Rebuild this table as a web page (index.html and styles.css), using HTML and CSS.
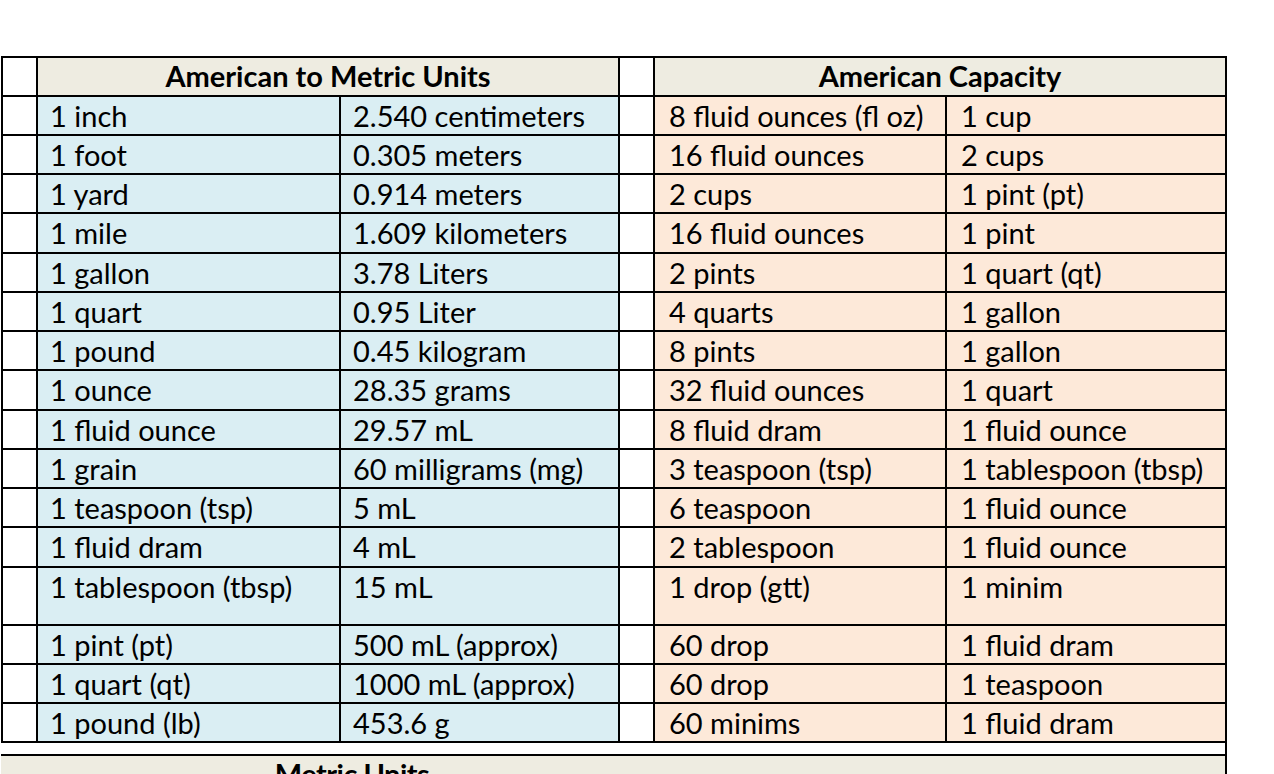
FILE: index.html
```html
<!DOCTYPE html>
<html>
<head>
<meta charset="utf-8">
<link rel="stylesheet" href="styles.css">
</head>
<body>
<div class="sheet">
  <div class="c w"></div><div class="c hd span2">American to Metric Units</div><div class="c w"></div><div class="c hd span2">American Capacity</div>

  <div class="c w"></div><div class="c b">1 inch</div><div class="c b">2.540 centimeters</div><div class="c w"></div><div class="c p">8 fluid ounces (fl oz)</div><div class="c p">1 cup</div>
  <div class="c w"></div><div class="c b">1 foot</div><div class="c b">0.305 meters</div><div class="c w"></div><div class="c p">16 fluid ounces</div><div class="c p">2 cups</div>
  <div class="c w"></div><div class="c b">1 yard</div><div class="c b">0.914 meters</div><div class="c w"></div><div class="c p">2 cups</div><div class="c p">1 pint (pt)</div>
  <div class="c w"></div><div class="c b">1 mile</div><div class="c b">1.609 kilometers</div><div class="c w"></div><div class="c p">16 fluid ounces</div><div class="c p">1 pint</div>
  <div class="c w"></div><div class="c b">1 gallon</div><div class="c b">3.78 Liters</div><div class="c w"></div><div class="c p">2 pints</div><div class="c p">1 quart (qt)</div>
  <div class="c w"></div><div class="c b">1 quart</div><div class="c b">0.95 Liter</div><div class="c w"></div><div class="c p">4 quarts</div><div class="c p">1 gallon</div>
  <div class="c w"></div><div class="c b">1 pound</div><div class="c b">0.45 kilogram</div><div class="c w"></div><div class="c p">8 pints</div><div class="c p">1 gallon</div>
  <div class="c w"></div><div class="c b">1 ounce</div><div class="c b">28.35 grams</div><div class="c w"></div><div class="c p">32 fluid ounces</div><div class="c p">1 quart</div>
  <div class="c w"></div><div class="c b">1 fluid ounce</div><div class="c b">29.57 mL</div><div class="c w"></div><div class="c p">8 fluid dram</div><div class="c p">1 fluid ounce</div>
  <div class="c w"></div><div class="c b">1 grain</div><div class="c b">60 milligrams (mg)</div><div class="c w"></div><div class="c p">3 teaspoon (tsp)</div><div class="c p">1 tablespoon (tbsp)</div>
  <div class="c w"></div><div class="c b">1 teaspoon (tsp)</div><div class="c b">5 mL</div><div class="c w"></div><div class="c p">6 teaspoon</div><div class="c p">1 fluid ounce</div>
  <div class="c w"></div><div class="c b">1 fluid dram</div><div class="c b">4 mL</div><div class="c w"></div><div class="c p">2 tablespoon</div><div class="c p">1 fluid ounce</div>
  <div class="c w"></div><div class="c b">1 tablespoon (tbsp)</div><div class="c b">15 mL</div><div class="c w"></div><div class="c p">1 drop (gtt)</div><div class="c p">1 minim</div>
  <div class="c w"></div><div class="c b">1 pint (pt)</div><div class="c b">500 mL (approx)</div><div class="c w"></div><div class="c p">60 drop</div><div class="c p">1 fluid dram</div>
  <div class="c w"></div><div class="c b">1 quart (qt)</div><div class="c b">1000 mL (approx)</div><div class="c w"></div><div class="c p">60 drop</div><div class="c p">1 teaspoon</div>
  <div class="c w"></div><div class="c b">1 pound (lb)</div><div class="c b">453.6 g</div><div class="c w"></div><div class="c p">60 minims</div><div class="c p">1 fluid dram</div>
</div>
<div class="metric">
  <div class="gap"></div>
  <div class="metric-head">
    <div class="metric-title">Metric Units</div>
    <div></div>
  </div>
</div>
</body>
</html>
```
FILE: styles.css
```css
html, body {
  margin: 0;
  padding: 0;
  background: #ffffff;
}
body {
  font-family: Lato, "Open Sans", sans-serif;
  font-size: 29px;
  color: #000;
  overflow: hidden;
}
.sheet {
  margin: 56px 0 0 1px;
  width: 1226px;
  box-sizing: border-box;
  display: grid;
  grid-template-columns: 33px 301px 277px 33px 290px 278px;
  grid-template-rows: 36.5px repeat(12, 37.25px) 56px repeat(3, 37px);
  gap: 2px;
  padding: 2px;
  background: #000;
}
.c {
  line-height: 37.25px;
  padding-left: 12px;
  white-space: nowrap;
  overflow: hidden;
}
.w {
  background: #ffffff;
}
.b {
  background: #daeef3;
}
.p {
  background: #fde9d9;
  padding-left: 14px;
}
.hd {
  background: #eeece1;
  font-weight: 700;
  text-align: center;
  padding-left: 0;
  line-height: 36.5px;
}
.span2 {
  grid-column: span 2;
}
.metric {
  margin-left: 1px;
  width: 1226px;
  box-sizing: border-box;
  border-right: 2px solid #000;
}
.gap {
  height: 11px;
}
.metric-head {
  border-top: 2px solid #000;
  background: #eeece1;
  display: grid;
  grid-template-columns: 702px 1fr;
  height: 40px;
}
.metric-title {
  font-weight: 700;
  text-align: center;
  line-height: 36.5px;
  letter-spacing: -0.5px;
}
```
